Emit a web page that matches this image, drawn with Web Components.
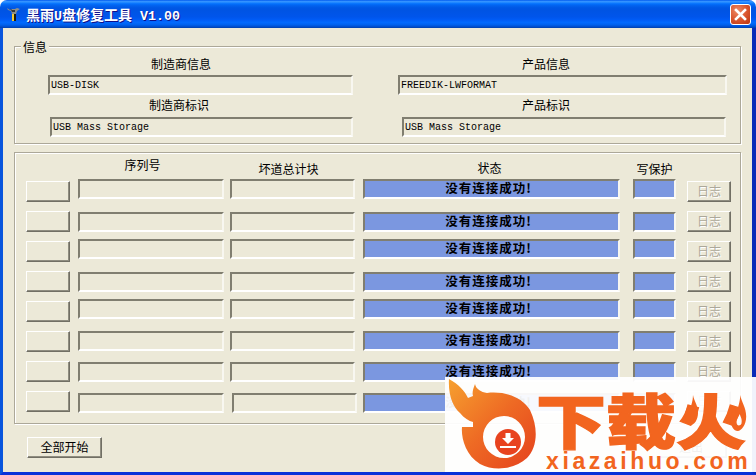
<!DOCTYPE html>
<html lang="zh">
<head>
<meta charset="utf-8">
<title>黑雨U盘修复工具</title>
<style>
    html, body { margin: 0; padding: 0; background: #fff; }
    body { width: 756px; height: 475px; overflow: hidden; font: 12px "Noto Sans CJK SC", "Liberation Sans", sans-serif; color: #000; }
</style>
</head>
<body>
<xp-window caption="黑雨U盘修复工具 V1.00">
    <xp-group label="信息" style="height:98px;">
        <info-grid>
            <info-cell label="制造商信息" value="USB-DISK" style="--label-x:103px;"></info-cell>
            <info-cell label="产品信息" value="FREEDIK-LWFORMAT" style="--label-x:124px;"></info-cell>
            <info-cell label="制造商标识" value="USB Mass Storage" style="--label-x:101px;--field-x:2px;--gap:5px;--label-top:3px;"></info-cell>
            <info-cell label="产品标识" value="USB Mass Storage" style="--label-x:124px;--field-x:4px;--field-r:1px;--gap:5px;--label-top:3px;"></info-cell>
        </info-grid>
    </xp-group>
    <xp-group style="height:272px;margin-top:8px;">
        <device-table></device-table>
    </xp-group>
    <xp-footer>
        <xp-button style="width:75px;height:21px;">全部开始</xp-button>
        <xp-button style="width:72px;height:21px;">退出</xp-button>
    </xp-footer>
    <logo-stamp slot="overlay"></logo-stamp>
</xp-window>

<script>
class XpWindow extends HTMLElement {
    connectedCallback() {
        this.attachShadow({ mode: 'open' });
        this.shadowRoot.innerHTML = `
            <style>
                :host {
                    display: flex;
                    flex-direction: column;
                    position: relative;
                    width: 756px;
                    height: 475px;
                    overflow: hidden;
                }
                .titlebar {
                    height: 28px;
                    flex: none;
                    display: flex;
                    align-items: center;
                    padding: 0 5px 0 7px;
                    border-radius: 7px 7px 0 0;
                    background: linear-gradient(180deg, #0058ee 0%, #3593ff 5%, #288eff 8%, #127dff 11%, #036ffc 14%, #0262ee 20%, #0057e5 28%, #0054e3 36%, #0055eb 60%, #005bf5 70%, #026afe 80%, #0062ef 88%, #0052d6 94%, #0040ab 100%);
                }
                .caption {
                    margin-left: 6px;
                    flex: 1;
                    color: #fff;
                    font-weight: 700;
                    font-size: 14px;
                    line-height: 28px;
                    white-space: pre;
                    text-shadow: 1px 1px 0 #0f1089;
                }
                .caption span { font: 700 13.33px "Liberation Mono", monospace; }
                .close {
                    width: 21px;
                    height: 21px;
                    box-sizing: border-box;
                    border: 1px solid #fff;
                    border-radius: 3px;
                    background: radial-gradient(circle at 35% 30%, #ed8a66, #d8532b 55%, #b93410);
                }
                .close svg { display: block; }
                .frame {
                    flex: 1;
                    display: flex;
                    flex-direction: column;
                    box-sizing: border-box;
                    background: #ece9d8;
                    padding: 18px 11px 0;
                    border-left: 3px solid #0855dd;
                    border-right: 4px solid #0a2bb8;
                    border-bottom: 3px solid #0831d9;
                }
            </style>
            <div class="titlebar">
                <svg width="13" height="14" viewBox="0 0 13 14">
                    <path d="M0 1l3 2 2-1h3l2-1 3 1-3 2-1 3H5L4 4 1 3z" fill="#8d8f8a"/>
                    <path d="M3 1l2 2h3v2H5z" fill="#33383c"/>
                    <rect x="5" y="7" width="4" height="7" fill="#f2c92f"/>
                    <rect x="7" y="7" width="2" height="7" fill="#1c1c12"/>
                </svg>
                <div class="caption"></div>
                <div class="close">
                    <svg width="19" height="19" viewBox="0 0 19 19"><path d="M5 5l9 9M14 5l-9 9" stroke="#fff" stroke-width="2.6" stroke-linecap="square" fill="none"/></svg>
                </div>
            </div>
            <div class="frame"><slot></slot></div>
            <slot name="overlay"></slot>
        `;
        // latin runs are narrower than the cjk ones in the original bitmap font
        this.shadowRoot.querySelector('.caption').innerHTML =
            this.getAttribute('caption').replace(/[ -~]+/g, m => `<span>${m}</span>`);
    }
}

class XpGroup extends HTMLElement {
    connectedCallback() {
        this.attachShadow({ mode: 'open' });
        const label = this.getAttribute('label');
        this.shadowRoot.innerHTML = `
            <style>
                :host {
                    display: block;
                    position: relative;
                    box-sizing: border-box;
                    flex: none;
                    border: 1px solid #aca899;
                    box-shadow: inset 1px 1px 0 #fff, 1px 1px 0 #fff;
                }
                .legend {
                    position: absolute;
                    left: 6px;
                    top: -8px;
                    padding: 0 2px;
                    line-height: 16px;
                    background: #ece9d8;
                }
            </style>
            ${label ? `<div class="legend">${label}</div>` : ''}
            <slot></slot>
        `;
    }
}

class InfoGrid extends HTMLElement {
    connectedCallback() {
        this.attachShadow({ mode: 'open' });
        this.shadowRoot.innerHTML = `
            <style>
                :host {
                    display: grid;
                    grid-template-columns: 305px 329px;
                    column-gap: 45px;
                    padding: 10px 0 0 33px;
                }
            </style>
            <slot></slot>
        `;
    }
}

class InfoCell extends HTMLElement {
    connectedCallback() {
        this.attachShadow({ mode: 'open' });
        this.shadowRoot.innerHTML = `
            <style>
                :host { display: block; padding-top: var(--label-top, 0); }
                .label {
                    padding-left: var(--label-x, 0);
                    line-height: 14px;
                    height: 14px;
                    white-space: nowrap;
                }
                sunken-field {
                    margin: var(--gap, 4px) var(--field-r, 0) 0 var(--field-x, 0);
                    height: 20px;
                }
            </style>
            <div class="label">${this.getAttribute('label')}</div>
            <sunken-field>${this.getAttribute('value')}</sunken-field>
        `;
    }
}

class SunkenField extends HTMLElement {
    connectedCallback() {
        this.attachShadow({ mode: 'open' });
        this.shadowRoot.innerHTML = `
            <style>
                :host {
                    display: flex;
                    align-items: center;
                    box-sizing: border-box;
                    border: 2px solid;
                    border-color: #807e70 #f8f7f0 #fff #807e70;
                    padding-left: 1px;
                    font: 10px "Liberation Mono", monospace;
                    white-space: nowrap;
                    overflow: hidden;
                }
            </style>
            <slot></slot>
        `;
    }
}

class XpButton extends HTMLElement {
    connectedCallback() {
        this.attachShadow({ mode: 'open' });
        this.shadowRoot.innerHTML = `
            <style>
                :host {
                    display: flex;
                    align-items: center;
                    justify-content: center;
                    box-sizing: border-box;
                    border: 1px solid;
                    border-color: #fff #716f64 #716f64 #fff;
                    box-shadow: inset -1px -1px 0 #8f8d80;
                    background: #ece9d8;
                }
                :host([disabled]) {
                    color: #aca899;
                    text-shadow: 1px 1px 0 #fff;
                }
                .txt { line-height: 18px; margin-top: -2px; white-space: nowrap; }
            </style>
            <div class="txt"><slot></slot></div>
        `;
    }
}

class DeviceTable extends HTMLElement {
    connectedCallback() {
        this.attachShadow({ mode: 'open' });
        // the row tops are not evenly spaced in the original dialog
        const shifts = [-2, 1, -2, 1, -2, 0, 1, 2];
        const rows = shifts.map((s, i) =>
            `<device-row shift="${s}"${i === 7 ? ' nudge="2"' : ''}></device-row>`).join('');
        this.shadowRoot.innerHTML = `
            <style>
                :host {
                    display: block;
                    padding-left: 11px;
                    font-size: 12px;
                }
                .head {
                    display: grid;
                    grid-template-columns: 44px 8px 146px 6px 125px 8px 257px 13px 43px 11px 44px;
                    height: 28px;
                    text-align: center;
                    line-height: 14px;
                }
                .head div { white-space: nowrap; }
                .rows { display: grid; grid-auto-rows: 30px; }
            </style>
            <div class="head">
                <div style="grid-column:3;padding:5px 17px 0 0;">序列号</div>
                <div style="grid-column:5;padding:9px 8px 0 0;">坏道总计块</div>
                <div style="grid-column:7;padding:8px 4px 0 0;">状态</div>
                <div style="grid-column:9;padding-top:9px;margin:0 -5px;">写保护</div>
            </div>
            <div class="rows">${rows}</div>
        `;
    }
}

class DeviceRow extends HTMLElement {
    connectedCallback() {
        this.attachShadow({ mode: 'open' });
        const shift = this.getAttribute('shift') || 0;
        const nudge = this.getAttribute('nudge') || 0;
        this.shadowRoot.innerHTML = `
            <style>
                :host {
                    display: grid;
                    grid-template-columns: 44px 146px 125px 257px 43px 44px;
                    align-items: start;
                }
                xp-button { height: 21px; }
                sunken-field { height: 20px; margin-top: ${shift}px; }
                .serial { margin-left: 8px; margin-right: -8px; }
                .bad { margin-left: ${14 + +nudge}px; margin-right: ${-14 - +nudge}px; }
                .state {
                    margin-left: 22px; margin-right: -22px;
                    background: #7b97e0;
                    justify-content: center;
                    padding: 0 6px 3px 0;
                    font: 700 12.5px/14px "Noto Sans CJK SC", sans-serif;
                    letter-spacing: 1px;
                }
                .wp { margin-left: 35px; margin-right: -35px; background: #7b97e0; }
                .log { margin-left: 46px; margin-right: -46px; }
            </style>
            <xp-button></xp-button>
            <sunken-field class="serial"></sunken-field>
            <sunken-field class="bad"></sunken-field>
            <sunken-field class="state">没有连接成功!</sunken-field>
            <sunken-field class="wp"></sunken-field>
            <xp-button class="log" disabled>日志</xp-button>
        `;
    }
}

class XpFooter extends HTMLElement {
    connectedCallback() {
        this.attachShadow({ mode: 'open' });
        this.shadowRoot.innerHTML = `
            <style>
                :host {
                    display: flex;
                    justify-content: space-between;
                    padding: 13px 14px 0 13px;
                }
            </style>
            <slot></slot>
        `;
    }
}

class LogoStamp extends HTMLElement {
    connectedCallback() {
        this.attachShadow({ mode: 'open' });
        const flame = 'M8 0C9 6 13 10 13 18C13 25 9 30 6 30C2 30 0 25 0 20C0 16 2 13 3 10C4 12 4 14 5 15C6 10 8 6 8 0ZM7 14C8 18 10 20 9 24C8 26 5 26 5 23C5 20 7 18 7 14Z';
        this.shadowRoot.innerHTML = `
            <style>
                :host {
                    position: absolute;
                    left: 445px;
                    top: 377px;
                    width: 311px;
                    height: 95px;
                    display: flex;
                    background: rgba(255, 255, 255, 0.94);
                    color: #f2651f;
                }
                .mark { flex: none; display: block; }
                .words {
                    position: relative;
                    margin-left: -9px;
                    flex: 1;
                    display: flex;
                    flex-direction: column;
                    padding-top: 12px;
                    box-sizing: border-box;
                }
                .cn {
                    height: 60px;
                    font: 900 70px/70px "Noto Sans CJK SC", sans-serif;
                    white-space: nowrap;
                    transform-origin: 0 0;
                    transform: scale(1, .85);
                    -webkit-text-stroke: 1.500px #f2651f;
                }
                .en {
                    margin: 1px 0 0 10px;
                    font: 700 23px/23px "Liberation Sans", sans-serif;
                    letter-spacing: 3.6px;
                    white-space: nowrap;
                }
                .fire { position: absolute; display: block; }
            </style>
            <svg class="mark" width="100" height="95" viewBox="0 0 100 95">
                <defs>
                    <linearGradient id="flame" x1="0" y1="0" x2="1" y2="1">
                        <stop offset="0" stop-color="#f6a02f"/>
                        <stop offset=".5" stop-color="#ee6a24"/>
                        <stop offset="1" stop-color="#e5411d"/>
                    </linearGradient>
                </defs>
                <path fill="url(#flame)" fill-rule="evenodd" d="M4 2C3 18 8 30 15 36C19 41 24 44 28 45L28 50L17 50C16 60 20 78 35 87C50 95 70 92 82 81C92 71 94 52 85 33C77 20 60 14 42 16C36 15 31 12 30 7C28 12 27 16 28 19L23 21C20 14 13 7 4 2Z M59 39A21 21 0 1 0 59 81A21 21 0 1 0 59 39Z"/>
                <circle cx="63" cy="65" r="13" fill="#e8431f"/>
                <path d="M60.500 56h5v5h3.500l-6 6-6-6h3.500z" fill="#fff"/>
                <rect x="55" y="69" width="16" height="2" fill="#fff"/>
            </svg>
            <div class="words">
                <div class="cn">下载火</div>
                <div class="en">xiazaihuo.com</div>
                <svg class="fire" style="left:149px;top:18px;" width="14" height="30" viewBox="0 0 14 30"><path fill="#f2651f" fill-rule="evenodd" d="${flame}"/></svg>
                <svg class="fire" style="left:194px;top:18px;" width="18" height="36" viewBox="0 0 14 30"><path fill="#f2651f" fill-rule="evenodd" d="${flame}"/></svg>
            </div>
        `;
    }
}

customElements.define('xp-window', XpWindow);
customElements.define('xp-group', XpGroup);
customElements.define('info-grid', InfoGrid);
customElements.define('info-cell', InfoCell);
customElements.define('sunken-field', SunkenField);
customElements.define('xp-button', XpButton);
customElements.define('device-table', DeviceTable);
customElements.define('device-row', DeviceRow);
customElements.define('xp-footer', XpFooter);
customElements.define('logo-stamp', LogoStamp);
</script>
</body>
</html>
